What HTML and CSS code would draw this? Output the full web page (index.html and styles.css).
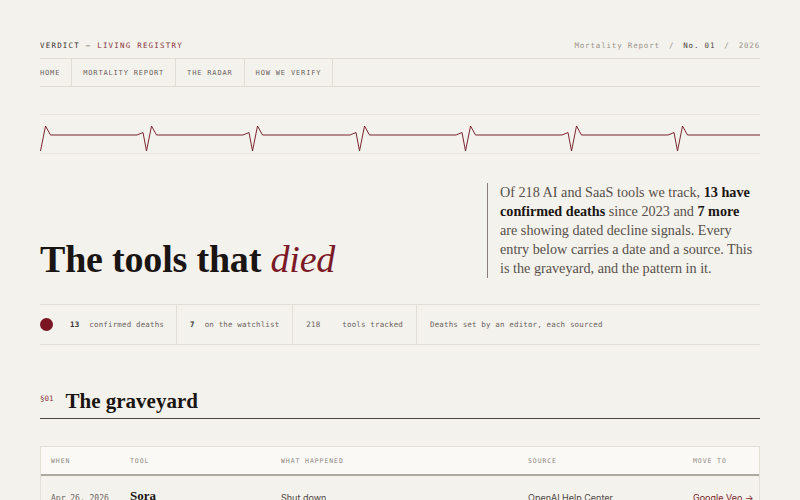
FILE: index.html
```html
<!DOCTYPE html>
<html lang="en">
<head>
<meta charset="utf-8">
<title>Verdict — Living Registry</title>
<link rel="stylesheet" href="styles.css">
</head>
<body>
<div class="page">
  <header class="masthead">
    <div class="brand"><span class="brand-name">VERDICT —</span> <span class="brand-sub">LIVING REGISTRY</span></div>
    <div class="meta"><span>Mortality Report</span><span class="sep">/</span><span class="meta-strong">No. 01</span><span class="sep">/</span><span>2026</span></div>
  </header>
  <nav class="nav">
    <a class="nav-item">HOME</a>
    <a class="nav-item">MORTALITY REPORT</a>
    <a class="nav-item">THE RADAR</a>
    <a class="nav-item">HOW WE VERIFY</a>
  </nav>
  <div class="pulse">
    <svg class="pulse-svg" width="720" height="38" viewBox="0 0 720 38">
      <path d="M0.5 36 L5.5 11 L10.5 20 L97 20 L103 17.5 L106.5 36 L111.5 11 L116.5 20 L203 20 L209 17.5 L212.5 36 L217.5 11 L222.5 20 L310 20 L316 17.5 L319.5 36 L324.5 11 L329.5 20 L416 20 L422 17.5 L425.5 36 L430.5 11 L435.5 20 L522 20 L528 17.5 L531.5 36 L536.5 11 L541.5 20 L628 20 L634 17.5 L637.5 36 L642.5 11 L647.5 20 L720 20" fill="none" stroke="#7a2531" stroke-width="1" stroke-linejoin="miter"/>
    </svg>
  </div>
  <section class="hero">
    <h1 class="hero-title">The tools that <em>died</em></h1>
    <p class="hero-lede">Of 218 AI and SaaS tools we track, <strong>13 have confirmed deaths</strong> since 2023 and <strong>7 more</strong> are showing dated decline signals. Every entry below carries a date and a source. This is the graveyard, and the pattern in it.</p>
  </section>
  <div class="stats">
    <div class="stat stat-first"><span class="dot"></span><b class="num">13</b><span class="label">confirmed deaths</span></div>
    <div class="stat"><b class="num">7</b><span class="label">on the watchlist</span></div>
    <div class="stat"><span class="num num-wide">218</span><span class="label">tools tracked</span></div>
    <div class="stat stat-last"><span class="label">Deaths set by an editor, each sourced</span></div>
  </div>
  <div class="section-head">
    <span class="section-no">§01</span>
    <h2 class="section-title">The graveyard</h2>
  </div>
  <div class="table">
    <div class="thead">
      <div class="th">WHEN</div>
      <div class="th">TOOL</div>
      <div class="th">WHAT HAPPENED</div>
      <div class="th">SOURCE</div>
      <div class="th">MOVE TO</div>
    </div>
    <div class="row">
      <div class="td td-date">Apr 26, 2026</div>
      <div class="td td-tool"><a class="tool-link">Sora</a></div>
      <div class="td td-text">Shut down</div>
      <div class="td td-text">OpenAI Help Center</div>
      <div class="td td-move">Google Veo →</div>
    </div>
  </div>
</div>
</body>
</html>
```
FILE: styles.css
```css
* { box-sizing: border-box; }
html, body { margin: 0; padding: 0; }
body {
  background: #f4f2ec;
  color: #1c1715;
  font-family: "Liberation Serif", serif;
}
.page { padding: 0 40px; }

.masthead {
  display: flex;
  justify-content: space-between;
  align-items: center;
  height: 59px;
  padding-top: 32px;
  border-bottom: 1px solid #e0ddd5;
  font-family: "DejaVu Sans Mono", monospace;
}
.brand { font-size: 7.5px; letter-spacing: 0.16em; }
.brand-name { color: #3a3330; }
.brand-sub { color: #8a3440; }
.meta { font-size: 7.5px; letter-spacing: 0.11em; color: #9a948c; }
.meta .sep { margin: 0 9px; }
.meta-strong { color: #4c4541; }

.nav {
  display: flex;
  height: 28px;
  border-bottom: 1px solid #e0ddd5;
  font-family: "DejaVu Sans Mono", monospace;
  font-size: 7px;
  letter-spacing: 0.12em;
  color: #6a635e;
}
.nav-item {
  display: flex;
  align-items: center;
  padding: 0 11px;
  border-right: 1px solid #e0ddd5;
}
.nav-item:first-child { padding-left: 0; }

.pulse {
  margin-top: 27px;
  height: 40px;
  border-top: 1px solid #e8e5de;
  border-bottom: 1px solid #e8e5de;
}
.pulse-svg { display: block; }

.hero {
  display: grid;
  grid-template-columns: 1fr 273px;
  align-items: end;
  margin-top: 29px;
}
.hero-title {
  margin: 0 0 -3px;
  font-size: 38px;
  line-height: 1.1;
  font-weight: 700;
  color: #1a1513;
  letter-spacing: -0.005em;
}
.hero-title em { font-weight: 400; color: #7a1a26; }
.hero-lede {
  margin: 0;
  padding-left: 12px;
  padding-right: 6px;
  border-left: 1px solid #8a7c76;
  font-size: 14.2px;
  line-height: 19px;
  color: #57504b;
}
.hero-lede strong { color: #1a1513; }

.stats {
  display: flex;
  margin-top: 26px;
  height: 41px;
  border-top: 1px solid #e2dfd7;
  border-bottom: 1px solid #e2dfd7;
  font-family: "DejaVu Sans Mono", monospace;
  font-size: 7.5px;
  letter-spacing: 0.02em;
  color: #6a635e;
}
.stat {
  display: flex;
  align-items: center;
  padding: 0 13px;
  border-right: 1px solid #e2dfd7;
}
.stat-first { padding-left: 0; padding-right: 12px; }
.stat-last { border-right: none; }
.dot {
  width: 13px;
  height: 13px;
  border-radius: 50%;
  background: #7a1524;
  margin-right: 17px;
}
.num { color: #3a3330; font-weight: 700; margin-right: 10px; }
.num-wide { font-weight: 400; color: #6a635e; margin-right: 22px; }

.section-head {
  display: flex;
  align-items: center;
  margin-top: 43px;
  padding-bottom: 4px;
  border-bottom: 1px solid #4a4440;
}
.section-no {
  font-family: "DejaVu Sans Mono", monospace;
  font-size: 7.5px;
  color: #8a3440;
  margin-right: 12px;
  margin-top: -6px;
}
.section-title {
  margin: 0;
  font-size: 21px;
  line-height: 26px;
  font-weight: 700;
  color: #1a1513;
}

.table {
  margin-top: 27px;
  border: 1px solid #e3e0d8;
  border-bottom: none;
}
.thead, .row {
  display: grid;
  grid-template-columns: 79px 151px 247px 165px 1fr;
}
.thead {
  height: 29px;
  background: #faf9f5;
  border-bottom: 2px solid #aea9a1;
  align-items: center;
}
.th {
  padding-left: 10px;
  font-family: "DejaVu Sans Mono", monospace;
  font-size: 6.5px;
  letter-spacing: 0.14em;
  color: #8e8882;
}
.row { padding-top: 10px; height: 60px; }
.td { padding-left: 10px; }
.td-date {
  padding-top: 8px;
  font-family: "DejaVu Sans Mono", monospace;
  font-size: 8px;
  color: #6a635e;
}
.tool-link {
  font-size: 13px;
  font-weight: 700;
  color: #1a1513;
  text-decoration: underline;
}
.td-text, .td-move {
  padding-top: 6px;
  font-family: Inter, "Liberation Sans", sans-serif;
  font-size: 9px;
  color: #4c4541;
}
.td-move { color: #7a1a26; }
```
